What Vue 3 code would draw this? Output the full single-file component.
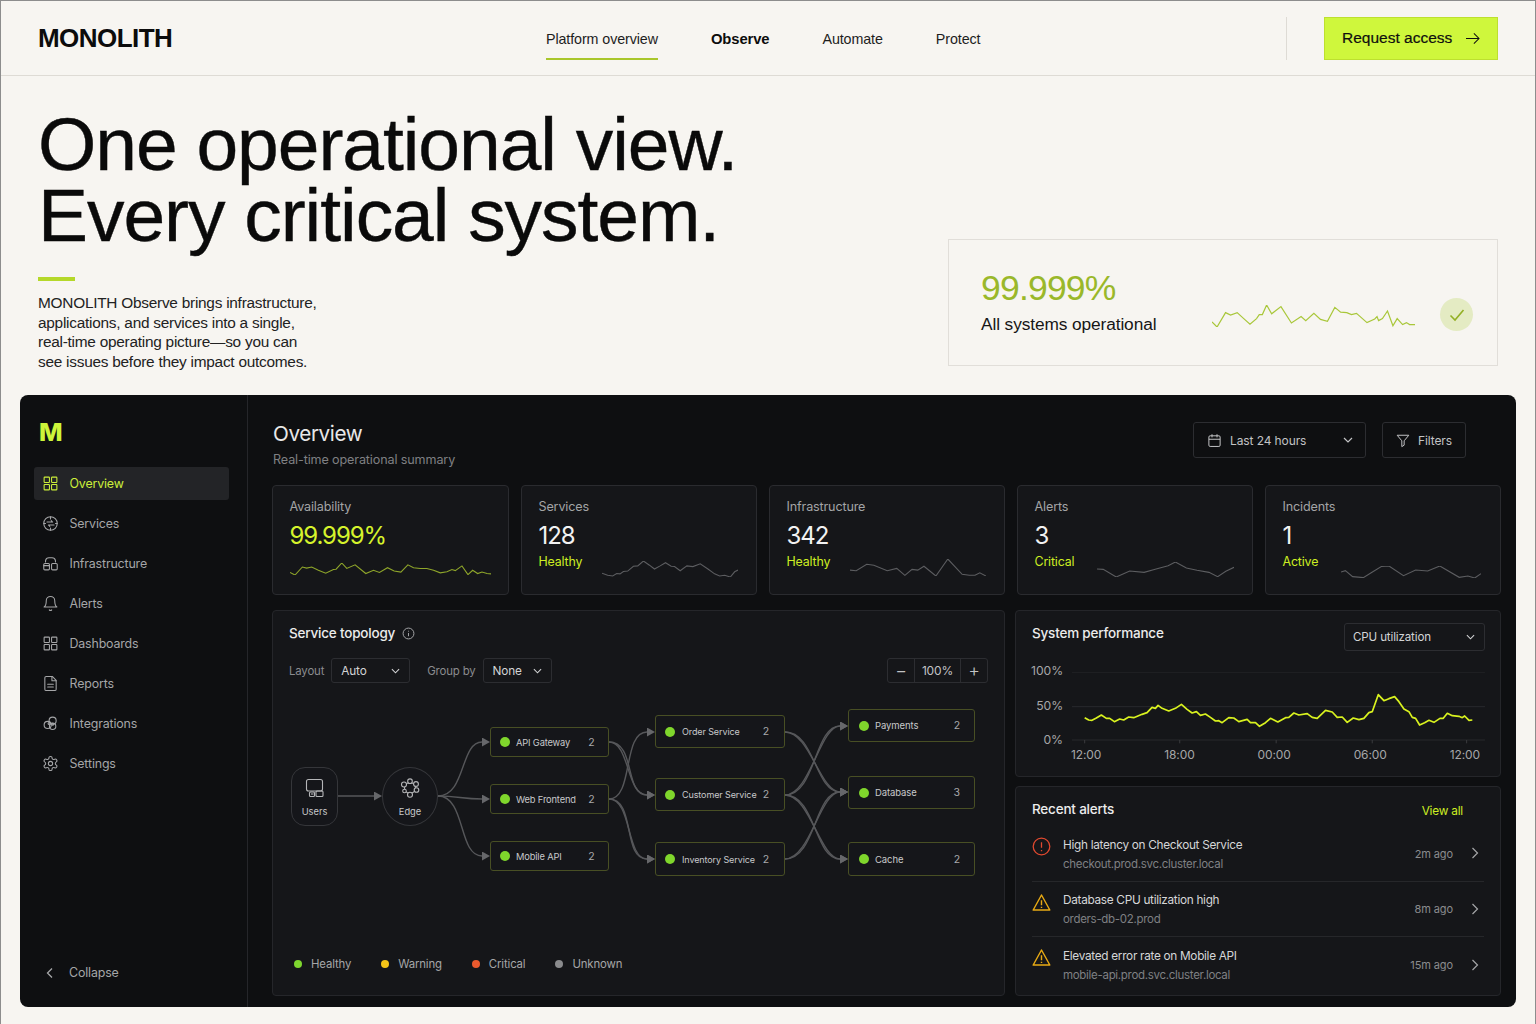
<script setup>
const navLinks = [
  { label: 'Platform overview', active: true },
  { label: 'Observe', bold: true },
  { label: 'Automate' },
  { label: 'Protect' }
]

const icons = {
  grid: '<rect x="3" y="3" width="7.5" height="7.5" rx="1"/><rect x="13.5" y="3" width="7.5" height="7.5" rx="1"/><rect x="3" y="13.5" width="7.5" height="7.5" rx="1"/><rect x="13.5" y="13.5" width="7.5" height="7.5" rx="1"/>',
  services: '<circle cx="12" cy="12" r="9.5"/><path d="M7 10h8l-2-2M17 14H9l2 2M12 2.5v3M12 18.5v3M2.5 12h2.5M19 12h2.5"/>',
  infra: '<path d="M5 10V8a5 5 0 0 1 5-4h4a5 5 0 0 1 5 4v2"/><rect x="2.5" y="12" width="8" height="9" rx="1.5"/><rect x="13.5" y="12" width="8" height="9" rx="1.5"/><path d="M2.5 15h8"/>',
  bell: '<path d="M6 8a6 6 0 0 1 12 0c0 7 3 9 3 9H3s3-2 3-9"/><path d="M10.3 21a2 2 0 0 0 3.4 0"/>',
  file: '<path d="M14.5 2H6a2 2 0 0 0-2 2v16a2 2 0 0 0 2 2h12a2 2 0 0 0 2-2V7.5z"/><path d="M14 2v6h6M8 13h8M8 17h8"/>',
  puzzle: '<circle cx="8" cy="14" r="5"/><circle cx="15" cy="8" r="5"/><circle cx="15" cy="16" r="4.5"/><circle cx="10" cy="12" r="1.4"/><circle cx="15" cy="13" r="1.4"/>',
  gear: '<path d="M12.22 2h-.44a2 2 0 0 0-2 2v.18a2 2 0 0 1-1 1.73l-.43.25a2 2 0 0 1-2 0l-.15-.08a2 2 0 0 0-2.73.73l-.22.38a2 2 0 0 0 .73 2.73l.15.1a2 2 0 0 1 1 1.72v.51a2 2 0 0 1-1 1.74l-.15.09a2 2 0 0 0-.73 2.73l.22.38a2 2 0 0 0 2.73.73l.15-.08a2 2 0 0 1 2 0l.43.25a2 2 0 0 1 1 1.73V20a2 2 0 0 0 2 2h.44a2 2 0 0 0 2-2v-.18a2 2 0 0 1 1-1.73l.43-.25a2 2 0 0 1 2 0l.15.08a2 2 0 0 0 2.73-.73l.22-.39a2 2 0 0 0-.73-2.73l-.15-.08a2 2 0 0 1-1-1.74v-.5a2 2 0 0 1 1-1.74l.15-.09a2 2 0 0 0 .73-2.73l-.22-.38a2 2 0 0 0-2.73-.73l-.15.08a2 2 0 0 1-2 0l-.43-.25a2 2 0 0 1-1-1.73V4a2 2 0 0 0-2-2z"/><circle cx="12" cy="12" r="3"/>'
}

const sideItems = [
  { label: 'Overview', icon: 'grid', active: true },
  { label: 'Services', icon: 'services' },
  { label: 'Infrastructure', icon: 'infra' },
  { label: 'Alerts', icon: 'bell' },
  { label: 'Dashboards', icon: 'grid' },
  { label: 'Reports', icon: 'file' },
  { label: 'Integrations', icon: 'puzzle' },
  { label: 'Settings', icon: 'gear' }
]

// sparkline points were read off the reference, scale comes from min/max
function spark(str) {
  const nums = str.split(/[ ,]+/).map(Number)
  const xs = nums.filter((_, i) => i % 2 === 0)
  const ys = nums.filter((_, i) => i % 2 === 1)
  const minX = Math.min(...xs)
  const minY = Math.min(...ys)
  return {
    points: str,
    viewBox: `${minX} ${minY} ${Math.max(...xs) - minX} ${Math.max(...ys) - minY}`
  }
}

const heroSpark = spark('730,963 743,976 765,940 778,946 795,940 812,955 828,969 845,955 852,945 860,945 871,921 884,943 908,925 935,966 960,950 972,960 993,942 1010,957 1028,962 1047,927 1062,939 1078,940 1090,945 1103,942 1130,965 1150,956 1156,950 1160,960 1170,955 1183,936 1197,973 1208,955 1222,970 1232,965 1240,970 1254,970')

const kpis = [
  {
    label: 'Availability', value: '99.999%', lime: true, w: 201, h: 12,
    line: spark('60,276 75,283 97,261 110,264 125,261 145,270 167,278 190,268 198,267 215,250 230,265 255,255 287,279 310,270 328,276 352,263 372,272 392,275 413,255 430,263 450,265 470,265 490,270 510,277 530,274 545,268 555,271 575,258 593,282 607,270 622,279 635,275 650,279 662,280')
  },
  {
    label: 'Services', value: '128', sub: 'Healthy', w: 136, h: 16, top: 9, right: 18,
    line: spark('998,279 1015,285 1030,287 1042,280 1052,281 1062,274 1075,273 1092,259 1105,258 1122,244 1140,256 1155,267 1172,258 1188,249 1205,259 1215,260 1232,272 1252,258 1270,260 1292,252 1315,267 1335,281 1350,287 1365,285 1382,290 1395,275 1405,270')
  },
  {
    label: 'Infrastructure', value: '342', sub: 'Healthy', w: 136, h: 17, top: 7, right: 18,
    line: spark('190,270 203,272 225,253 240,256 268,272 288,265 305,285 320,268 332,270 345,259 370,287 395,238 425,282 440,285 452,285 462,278 475,287')
  },
  {
    label: 'Alerts', value: '3', sub: 'Critical', w: 137, h: 15, top: 10, right: 18,
    line: spark('707,268 720,269 747,292 775,274 805,278 830,268 855,258 870,247 893,265 915,272 940,278 958,291 975,275 992,263')
  },
  {
    label: 'Incidents', value: '1', sub: 'Active', w: 140, h: 12, top: 14, right: 19,
    line: spark('1216,277 1225,273 1240,291 1262,294 1280,278 1300,260 1315,259 1345,288 1370,271 1395,274 1420,259 1460,293 1478,289 1492,295 1505,282')
  }
]

const cpuLine = '193,323 205,330 215,331 228,324 243,315 258,325 268,325 282,335 298,327 310,330 325,321 340,323 365,313 380,308 395,292 405,295 413,286 425,295 445,303 465,295 483,283 500,298 515,309 528,305 540,316 555,312 570,322 585,333 595,332 605,338 625,323 640,324 655,335 680,328 690,338 705,338 717,349 735,338 750,325 772,336 795,323 805,322 820,309 835,315 860,311 875,322 890,325 915,301 935,306 950,322 965,321 980,337 998,324 1015,329 1030,325 1045,308 1055,305 1073,254 1090,272 1105,266 1122,260 1135,275 1150,297 1165,305 1175,322 1185,325 1197,345 1212,338 1225,331 1240,337 1258,325 1268,325 1280,310 1295,317 1315,319 1325,323 1332,318 1345,331 1355,330'

// canvas sits at 273,695 on the page, node coordinates are page coordinates
const originX = 273
const originY = 695
const services = [
  { name: 'API Gateway', count: 2, x: 490, y: 727, w: 119, h: 30, tier: 'first' },
  { name: 'Web Frontend', count: 2, x: 490, y: 784, w: 119, h: 30, tier: 'first' },
  { name: 'Mobile API', count: 2, x: 490, y: 841, w: 119, h: 30, tier: 'first' },
  { name: 'Order Service', count: 2, x: 655, y: 715, w: 130, h: 33, tier: 'mid' },
  { name: 'Customer Service', count: 2, x: 655, y: 778, w: 130, h: 33, tier: 'mid' },
  { name: 'Inventory Service', count: 2, x: 655, y: 842, w: 130, h: 34, tier: 'mid' },
  { name: 'Payments', count: 2, x: 848, y: 709, w: 127, h: 33, tier: 'big' },
  { name: 'Database', count: 3, x: 848, y: 776, w: 127, h: 33, tier: 'big' },
  { name: 'Cache', count: 2, x: 848, y: 842, w: 127, h: 34, tier: 'big' }
]

const edges = [
  'M338 796 L374 796',
  'M438 796 C466 796 460 742 482 742',
  'M438 796 C458 796 462 799 482 799',
  'M438 796 C466 796 458 856 482 856',
  'M609 799 C634 799 622 732 647 732',
  'M609 742 C630 742 626 795 647 795',
  'M609 742 C636 742 624 795 647 795',
  'M609 799 C632 799 626 859 647 859',
  'M609 799 C636 799 622 859 647 859',
  'M785 732 C815 732 815 792 840 792',
  'M785 732 C810 732 820 792 840 792',
  'M785 795 C816 795 814 726 840 726',
  'M785 795 C810 795 820 726 840 726',
  'M785 795 C816 795 814 859 840 859',
  'M785 795 C810 795 820 859 840 859',
  'M785 859 C816 859 814 792 840 792',
  'M785 859 C810 859 820 792 840 792'
]

const legend = [
  { label: 'Healthy', color: '#7ed62f' },
  { label: 'Warning', color: '#f5c518' },
  { label: 'Critical', color: '#ea5a2e' },
  { label: 'Unknown', color: '#8a8b8d' }
]

const alerts = [
  { title: 'High latency on Checkout Service', host: 'checkout.prod.svc.cluster.local', time: '2m ago', level: 'critical' },
  { title: 'Database CPU utilization high', host: 'orders-db-02.prod', time: '8m ago', level: 'warning' },
  { title: 'Elevated error rate on Mobile API', host: 'mobile-api.prod.svc.cluster.local', time: '15m ago', level: 'warning' }
]
</script>

<template>
  <div class="page">
    <header class="topbar">
      <div class="brand">MONOLITH</div>
      <nav class="nav">
        <a v-for="link in navLinks" :key="link.label" class="nav-link" :class="{ active: link.active, bold: link.bold }">{{ link.label }}</a>
      </nav>
      <div class="topbar-right">
        <span class="divider"></span>
        <button class="cta">
          Request access
          <svg width="15" height="13" viewBox="0 0 16 14" fill="none" stroke="currentColor" stroke-width="1.100"><path d="M1 7h14M9.500 1.500 15 7l-5.500 5.500" /></svg>
        </button>
      </div>
    </header>

    <section class="hero">
      <div class="hero-copy">
        <h1>One operational view.<br />Every critical system.</h1>
        <div class="accent"></div>
        <p>MONOLITH Observe brings infrastructure,<br />applications, and services into a single,<br />real-time operating picture—so you can<br />see issues before they impact outcomes.</p>
      </div>
      <div class="status-card">
        <div class="status-text">
          <div class="status-value">99.999%</div>
          <div class="status-label">All systems operational</div>
        </div>
        <svg class="status-spark" width="203" height="22" :viewBox="heroSpark.viewBox" preserveAspectRatio="none" fill="none">
          <polyline :points="heroSpark.points" stroke="#a9c73a" stroke-width="1.200" vector-effect="non-scaling-stroke" />
        </svg>
        <div class="status-check">
          <svg width="16" height="14" viewBox="0 0 16 14" fill="none" stroke="#93b025" stroke-width="1.600"><path d="M1.500 7.500 6 12 14.500 2" /></svg>
        </div>
      </div>
    </section>

    <section class="panel">
      <aside class="sidebar">
        <div class="side-logo">M</div>
        <div class="side-list">
          <a v-for="item in sideItems" :key="item.label" class="side-item" :class="{ active: item.active }">
            <svg width="17" height="17" viewBox="0 0 24 24" fill="none" stroke="currentColor" stroke-width="1.500" stroke-linecap="round" stroke-linejoin="round" v-html="icons[item.icon]"></svg>
            {{ item.label }}
          </a>
        </div>
        <a class="collapse">
          <svg width="10" height="12" viewBox="0 0 10 12" fill="none" stroke="currentColor" stroke-width="1.300"><path d="M7 1.500 2.500 6 7 10.500" /></svg>
          Collapse
        </a>
      </aside>

      <main class="main">
        <div class="main-head">
          <div class="head-text">
            <h2>Overview</h2>
            <div class="subtitle">Real-time operational summary</div>
          </div>
          <div class="head-actions">
            <button class="ghost range">
              <svg width="15" height="15" viewBox="0 0 24 24" fill="none" stroke="currentColor" stroke-width="1.600"><rect x="3" y="4.500" width="18" height="17" rx="2" /><path d="M3 10h18M8 2v5M16 2v5" /></svg>
              <span>Last 24 hours</span>
              <svg class="push" width="10" height="6" viewBox="0 0 10 6" fill="none" stroke="currentColor" stroke-width="1.200"><path d="M1 1l4 4 4-4" /></svg>
            </button>
            <button class="ghost filters">
              <svg width="15" height="15" viewBox="0 0 24 24" fill="none" stroke="currentColor" stroke-width="1.700" stroke-linejoin="round"><path d="M2 3h20l-8 9.500V20l-4 2.500V12.500z" /></svg>
              <span>Filters</span>
            </button>
          </div>
        </div>

        <div class="kpis">
          <div v-for="kpi in kpis" :key="kpi.label" class="kpi">
            <div class="kpi-label">{{ kpi.label }}</div>
            <div class="kpi-value" :class="{ lime: kpi.lime }">{{ kpi.value }}</div>
            <div class="kpi-foot" :class="{ wide: !kpi.sub }">
              <span v-if="kpi.sub" class="kpi-sub">{{ kpi.sub }}</span>
              <svg :width="kpi.w" :height="kpi.h" :viewBox="kpi.line.viewBox" preserveAspectRatio="none" fill="none" :style="{ marginTop: (kpi.top || 0) + 'px', marginRight: (kpi.right ? kpi.right - 16 : 0) + 'px' }">
                <polyline :points="kpi.line.points" :stroke="kpi.lime ? '#8fa62a' : '#5c5d60'" stroke-width="1.100" vector-effect="non-scaling-stroke" />
              </svg>
            </div>
          </div>
        </div>

        <div class="lower">
          <div class="card topology">
            <div class="topo-title">
              Service topology
              <svg width="13" height="13" viewBox="0 0 24 24" fill="none" stroke="#a5a6a8" stroke-width="1.800"><circle cx="12" cy="12" r="10" /><path d="M12 11v6M12 7v1.500" /></svg>
            </div>
            <div class="topo-tools">
              <span class="tool-label">Layout</span>
              <div class="select auto-sel">Auto
                <svg width="9" height="6" viewBox="0 0 10 6" fill="none" stroke="currentColor" stroke-width="1.200"><path d="M1 1l4 4 4-4" /></svg>
              </div>
              <span class="tool-label group-label">Group by</span>
              <div class="select none-sel">None
                <svg width="9" height="6" viewBox="0 0 10 6" fill="none" stroke="currentColor" stroke-width="1.200"><path d="M1 1l4 4 4-4" /></svg>
              </div>
              <div class="zoomer">
                <span class="z-btn">−</span>
                <span class="z-val">100%</span>
                <span class="z-btn">+</span>
              </div>
            </div>

            <div class="canvas">
              <svg class="edges" :viewBox="`${originX} ${originY} 731 245`" fill="none">
                <defs>
                  <marker id="tip" markerWidth="8" markerHeight="9" refX="0" refY="4.500" orient="auto" markerUnits="userSpaceOnUse">
                    <path d="M0 0 8 4.500 0 9z" fill="#66676a" />
                  </marker>
                </defs>
                <path v-for="d in edges" :key="d" :d="d" stroke="#56575a" stroke-width="1.400" marker-end="url(#tip)" />
              </svg>

              <div class="hub users" :style="{ left: 291 - originX + 'px', top: 767 - originY + 'px' }">
                <svg width="20" height="20" viewBox="0 0 20 20" fill="none" stroke="#b5b6b8" stroke-width="1.100" stroke-linejoin="round"><rect x="1.500" y="1.500" width="16" height="11.500" rx="2" /><path d="M6 16h2.500" /><rect x="4.500" y="14" width="5" height="4.500" rx="1" /><rect x="11" y="13" width="7" height="5.500" rx="1" /></svg>
                <span>Users</span>
              </div>
              <div class="hub edge" :style="{ left: 382 - originX + 'px', top: 767 - originY + 'px' }">
                <svg width="20" height="20" viewBox="0 0 20 20" fill="none" stroke="#b5b6b8" stroke-width="1.100"><circle cx="10" cy="10" r="5.500" /><circle cx="10" cy="3.200" r="2.300" fill="#15161a" /><circle cx="4" cy="6.500" r="2.500" fill="#15161a" /><circle cx="16" cy="6" r="2.400" fill="#15161a" /><circle cx="16.500" cy="12" r="2.300" fill="#15161a" /><circle cx="10" cy="16.800" r="2.500" fill="#15161a" /><circle cx="4.500" cy="13" r="1.800" fill="#15161a" /></svg>
                <span>Edge</span>
              </div>

              <div
                v-for="s in services"
                :key="s.name"
                class="node"
                :class="s.tier"
                :style="{ left: s.x - originX + 'px', top: s.y - originY + 'px', width: s.w + 'px', height: s.h + 'px' }"
              >
                <i class="node-dot"></i>
                <span class="node-name">{{ s.name }}</span>
                <span class="node-count">{{ s.count }}</span>
              </div>
            </div>

            <div class="legend">
              <span v-for="l in legend" :key="l.label" class="legend-item">
                <i :style="{ background: l.color }"></i>{{ l.label }}
              </span>
            </div>
          </div>

          <div class="side-cards">
            <div class="card perf">
              <div class="perf-head">
                <div class="card-title">System performance</div>
                <div class="select cpu-sel">CPU utilization
                  <svg width="9" height="6" viewBox="0 0 10 6" fill="none" stroke="currentColor" stroke-width="1.200"><path d="M1 1l4 4 4-4" /></svg>
                </div>
              </div>
              <div class="chart">
                <div class="y-axis"><span>100%</span><span>50%</span><span>0%</span></div>
                <svg class="plot" width="413" height="79" viewBox="155 186 1238 237" preserveAspectRatio="none" fill="none">
                  <path d="M155 186H1393M155 290H1393M155 390H1393" stroke="#28292c" stroke-width="1" vector-effect="non-scaling-stroke" />
                  <path d="M193 390v10M478 390v10M767 390v10M1055 390v10M1338 390v10" stroke="#3a3b3e" stroke-width="1" vector-effect="non-scaling-stroke" />
                  <polyline :points="cpuLine" stroke="#d9f21f" stroke-width="1.700" stroke-linejoin="round" vector-effect="non-scaling-stroke" />
                </svg>
              </div>
              <div class="x-axis"><span>12:00</span><span>18:00</span><span>00:00</span><span>06:00</span><span>12:00</span></div>
            </div>

            <div class="card recent">
              <div class="recent-head">
                <div class="card-title">Recent alerts</div>
                <a class="view-all">View all</a>
              </div>
              <div v-for="a in alerts" :key="a.title" class="alert">
                <svg v-if="a.level === 'critical'" class="alert-icon" width="19" height="19" viewBox="0 0 24 24" fill="none" stroke="#e0492f" stroke-width="1.600"><circle cx="12" cy="12" r="10.500" /><path d="M12 6.500v7M12 16.500v1.500" /></svg>
                <svg v-else class="alert-icon" width="19" height="19" viewBox="0 0 24 24" fill="none" stroke="#e8aa14" stroke-width="1.800" stroke-linejoin="round"><path d="M12 2.500 1.500 21.500h21z" /><path d="M12 9v6.500M12 17.500v1.500" /></svg>
                <div class="alert-text">
                  <div class="alert-title">{{ a.title }}</div>
                  <div class="alert-host">{{ a.host }}</div>
                </div>
                <span class="alert-time">{{ a.time }}</span>
                <svg class="alert-chev" width="8" height="12" viewBox="0 0 8 12" fill="none" stroke="#a5a6a8" stroke-width="1.200"><path d="M1.500 1 6.500 6l-5 5" /></svg>
              </div>
            </div>
          </div>
        </div>
      </main>
    </section>
  </div>
</template>

<style>
html,
body {
  margin: 0;
  background: #f7f5f1;
}
</style>

<style scoped>
.page {
  box-sizing: border-box;
  width: 1536px;
  height: 1024px;
  overflow: hidden;
  background: #f7f5f1;
  border: 1px solid #8d8d8d;
  border-bottom: 0;
  font-family: "Liberation Sans", Arial, sans-serif;
  color: #111;
}

.topbar {
  display: flex;
  align-items: center;
  height: 75px;
  box-sizing: border-box;
  padding: 0 37px;
  border-bottom: 1px solid #dedbd5;
}

.brand {
  width: 508px;
  margin-top: 1px;
  font-size: 26px;
  font-weight: 700;
  letter-spacing: -0.55px;
  color: #0c0c0c;
}

.nav {
  display: flex;
  gap: 53px;
  align-self: stretch;
}

.nav-link {
  display: flex;
  align-items: center;
  height: 39px;
  margin-top: 17px;
  padding-top: 1px;
  font-size: 14.300px;
  letter-spacing: -0.100px;
  color: #1d1d1d;
  border-bottom: 2px solid transparent;
}

.nav-link.active {
  border-bottom-color: #a9c62b;
}

.nav-link.bold {
  font-size: 14.800px;
  font-weight: 700;
  color: #0c0c0c;
}

.topbar-right {
  display: flex;
  align-items: center;
  gap: 37px;
  margin-left: auto;
}

.divider {
  width: 1px;
  height: 43px;
  background: #dedbd5;
}

.cta {
  display: flex;
  align-items: center;
  justify-content: space-between;
  box-sizing: border-box;
  width: 174px;
  height: 43px;
  padding: 0 17px 0 17px;
  background: #cff73c;
  border: 1px solid #bde02f;
  font-family: "Liberation Sans", Arial, sans-serif;
  font-size: 15.500px;
  color: #0f0f0f;
  -webkit-text-stroke: 0.2px #0f0f0f;
}

.hero {
  display: flex;
  justify-content: space-between;
  height: 319px;
  box-sizing: border-box;
  padding: 0 37px 0 37px;
}

.hero h1 {
  margin: 33px 0 0;
  font-size: 75px;
  font-weight: 400;
  line-height: 70.500px;
  letter-spacing: -1.050px;
  color: #0a0a0a;
  -webkit-text-stroke: 0.4px #0a0a0a;
}

.accent {
  width: 37px;
  height: 4px;
  margin-top: 27px;
  background: #b5d82a;
}

.hero p {
  margin: 12px 0 0;
  font-size: 15.400px;
  line-height: 19.500px;
  letter-spacing: -0.250px;
  color: #222;
}

.status-card {
  display: flex;
  align-items: center;
  align-self: flex-end;
  box-sizing: border-box;
  width: 550px;
  height: 127px;
  margin-bottom: 29px;
  padding: 0 24px 0 32px;
  border: 1.500px solid #e1ded9;
}

.status-value {
  font-size: 35.500px;
  line-height: 40px;
  letter-spacing: -0.800px;
  color: #9ab82a;
}

.status-label {
  margin-top: 5px;
  font-size: 17.300px;
  line-height: 22px;
  letter-spacing: -0.100px;
  color: #161616;
}

.status-text {
  width: 231px;
  margin-top: -2px;
}

.status-spark {
  margin-top: 27px;
}

.status-check {
  display: flex;
  align-items: center;
  justify-content: center;
  width: 33px;
  height: 33px;
  margin-top: 24px;
  margin-left: auto;
  border-radius: 50%;
  background: #e4ebc3;
}

.panel {
  display: flex;
  width: 1496px;
  height: 612px;
  margin-left: 19px;
  background: #0e0f11;
  border-radius: 8px;
  overflow: hidden;
  font-family: Inter, "Liberation Sans", sans-serif;
  color: #a5a6a8;
}

.sidebar {
  display: flex;
  flex-direction: column;
  box-sizing: border-box;
  width: 228px;
  flex: none;
  padding: 21px 18px 27px 14px;
  border-right: 1px solid #25262a;
}

.side-logo {
  height: 30px;
  margin-left: 5px;
  font-size: 25px;
  font-weight: 800;
  line-height: 32px;
  color: #cdf53a;
}

.side-list {
  display: flex;
  flex-direction: column;
  gap: 7px;
  margin-top: 21px;
}

.side-item {
  display: flex;
  align-items: center;
  gap: 10.500px;
  height: 33px;
  padding-left: 8px;
  padding-bottom: 1px;
  box-sizing: border-box;
  border-radius: 3px;
  font-size: 12.400px;
  letter-spacing: -0.150px;
}

.side-item.active {
  background: #232427;
  color: #cdf03a;
}

.collapse {
  display: flex;
  align-items: center;
  gap: 14px;
  margin-top: auto;
  padding-left: 11px;
  font-size: 12.400px;
  letter-spacing: -0.150px;
}

.main {
  flex: 1;
  min-width: 0;
  padding: 25px 15px 11px 24px;
}

.main-head {
  display: flex;
  justify-content: space-between;
  height: 65px;
  padding: 0 35px 0 1px;
}

.head-text {
  padding-top: 1px;
}

.main-head h2 {
  margin: 0;
  font-size: 20.700px;
  font-weight: 400;
  line-height: 26px;
  letter-spacing: -0.400px;
  color: #e8e8e8;
}

.subtitle {
  margin-top: 5px;
  font-size: 12.600px;
  letter-spacing: -0.130px;
  color: #7f8083;
}

.head-actions {
  display: flex;
  gap: 16px;
  margin-top: 2px;
}

.ghost {
  display: flex;
  align-items: center;
  gap: 8px;
  box-sizing: border-box;
  height: 36px;
  padding: 0 13px;
  background: transparent;
  border: 1px solid #2c2d31;
  border-radius: 3px;
  font-family: Inter, "Liberation Sans", sans-serif;
  font-size: 12px;
  letter-spacing: -0.100px;
  color: #c2c3c5;
}

.range {
  width: 173px;
  padding-right: 12px;
}

.filters {
  width: 84px;
}

.push {
  margin-left: auto;
}

.kpis {
  display: grid;
  grid-template-columns: 237px repeat(4, 1fr);
  gap: 12px;
}

.kpi {
  box-sizing: border-box;
  height: 110px;
  padding: 13px 0 0 16.500px;
  background: #151619;
  border: 1px solid #2a2b2f;
  border-radius: 4px;
}

.kpi-label {
  font-size: 12.600px;
  line-height: 16px;
  letter-spacing: -0.150px;
  color: #a3a4a6;
}

.kpi-value {
  margin-top: 6px;
  font-size: 24px;
  line-height: 30px;
  letter-spacing: -1.100px;
  color: #f2f2f2;
}

.kpi-value.lime {
  color: #d6f32c;
}

.kpi-foot {
  display: flex;
  justify-content: space-between;
  align-items: flex-start;
  margin-top: 1px;
  padding-right: 16px;
}

.kpi-foot.wide {
  margin-top: 12px;
}

.kpi-sub {
  padding-top: 1px;
  font-size: 12.400px;
  line-height: 18px;
  letter-spacing: -0.150px;
  color: #cdee22;
}

.lower {
  display: flex;
  gap: 10px;
  margin-top: 15px;
}

.card {
  box-sizing: border-box;
  background: #151619;
  border: 1px solid #25262a;
  border-radius: 4px;
}

.topology {
  width: 733px;
  height: 386px;
  flex: none;
  padding: 13px 16px 0;
}

.topo-title,
.card-title {
  font-size: 13.500px;
  font-weight: 500;
  line-height: 18px;
  letter-spacing: -0.200px;
  color: #ececec;
}

.topo-title {
  display: flex;
  align-items: center;
  gap: 7px;
}

.topo-tools {
  display: flex;
  align-items: center;
  margin-top: 16px;
  height: 25px;
}

.tool-label {
  margin-right: 7px;
  font-size: 11.400px;
  letter-spacing: -0.150px;
  color: #8b8c8f;
}

.group-label {
  margin-left: 17px;
}

.select {
  display: flex;
  align-items: center;
  justify-content: space-between;
  box-sizing: border-box;
  height: 25px;
  padding: 0 9px;
  border: 1px solid #2c2d31;
  border-radius: 3px;
  font-size: 11.800px;
  letter-spacing: -0.150px;
  color: #d3d4d6;
}

.auto-sel {
  width: 79px;
}

.none-sel {
  width: 69px;
}

.cpu-sel {
  width: 141px;
  height: 28px;
  padding-left: 8px;
  font-size: 11.600px;
}

.zoomer {
  display: flex;
  margin-left: auto;
  height: 25px;
  box-sizing: border-box;
  border: 1px solid #2c2d31;
  border-radius: 3px;
  font-size: 12px;
  letter-spacing: -0.150px;
  color: #c2c3c5;
}

.z-btn {
  display: flex;
  align-items: center;
  justify-content: center;
  width: 26px;
  font-size: 18px;
  font-weight: 300;
}

.z-val {
  display: flex;
  align-items: center;
  justify-content: center;
  box-sizing: border-box;
  width: 47px;
  border-left: 1px solid #2c2d31;
  border-right: 1px solid #2c2d31;
}

.canvas {
  position: relative;
  width: 731px;
  height: 245px;
  margin: 12px 0 0 -16px;
}

.edges {
  position: absolute;
  inset: 0;
  width: 100%;
  height: 100%;
}

.hub {
  position: absolute;
  display: flex;
  flex-direction: column;
  align-items: center;
  justify-content: center;
  gap: 8px;
  box-sizing: border-box;
  height: 59px;
  padding-top: 2px;
  background: #15161a;
  border: 1px solid #35363a;
  font-size: 9.300px;
  color: #c8c9cb;
}

.hub.users {
  width: 47px;
  border-radius: 14px;
}

.hub.edge {
  width: 56px;
  border-radius: 50%;
}

.node {
  position: absolute;
  display: flex;
  align-items: center;
  box-sizing: border-box;
  padding: 0 15px 0 9px;
  background: #15161a;
  border: 1px solid #484f24;
  border-radius: 3px;
  font-size: 9.300px;
  letter-spacing: -0.150px;
  color: #c8c9cb;
}

.node.first {
  padding-right: 13.500px;
}

.node.mid {
  font-size: 9px;
  letter-spacing: -0.100px;
}

.node.mid .node-dot {
  margin-right: 7px;
}

.node.big {
  padding: 0 14px 0 10px;
  font-size: 9.500px;
  letter-spacing: -0.100px;
}

.node-dot {
  flex: none;
  width: 10px;
  height: 10px;
  margin-right: 6px;
  border-radius: 50%;
  background: #7fd62c;
}

.node-count {
  margin-left: auto;
  font-size: 10.500px;
  color: #a9aaac;
}

.legend {
  display: flex;
  align-items: center;
  margin-top: 17px;
  padding-left: 5px;
  font-size: 11.400px;
  letter-spacing: -0.150px;
  color: #a5a6a8;
}

.legend-item {
  display: flex;
  align-items: center;
  gap: 9px;
  margin-right: 30px;
}

.legend-item i {
  width: 8px;
  height: 8px;
  border-radius: 50%;
}

.side-cards {
  display: flex;
  flex: 1;
  flex-direction: column;
  gap: 9px;
}

.perf {
  height: 167px;
  padding: 12px 15px 0 16px;
}

.perf-head {
  display: flex;
  justify-content: space-between;
  align-items: flex-start;
}

.perf-head .card-title {
  margin-top: 1px;
}

.chart {
  display: flex;
  justify-content: space-between;
  margin-top: 21px;
}

.y-axis {
  display: flex;
  flex-direction: column;
  align-items: flex-end;
  width: 31px;
  height: 85px;
  justify-content: space-between;
  margin-top: -9px;
  font-size: 12.200px;
  line-height: 16px;
  letter-spacing: -0.100px;
  color: #a5a6a8;
}

.x-axis {
  display: flex;
  justify-content: space-between;
  margin: -4px 5px 0 39px;
  font-size: 12px;
  letter-spacing: -0.100px;
  color: #a5a6a8;
}

.recent {
  height: 210px;
  padding: 13px 16px 0;
}

.recent-head {
  display: flex;
  justify-content: space-between;
  align-items: flex-start;
  padding-right: 21px;
  margin-bottom: 8px;
}

.view-all {
  margin-top: 4px;
  font-size: 11.800px;
  letter-spacing: -0.200px;
  color: #cdee22;
}

.alert {
  display: flex;
  align-items: center;
  height: 55.500px;
  box-sizing: border-box;
  border-bottom: 1px solid #26272a;
}

.alert:last-child {
  border-bottom: 0;
}

.alert-icon {
  flex: none;
  align-self: flex-start;
  margin-top: 11px;
  margin-right: 12px;
}

.alert-text {
  padding-top: 2px;
}

.alert-title {
  font-size: 11.800px;
  line-height: 18px;
  letter-spacing: -0.300px;
  color: #d5d6d8;
}

.alert-host {
  margin-top: 1px;
  font-size: 11.500px;
  line-height: 18px;
  letter-spacing: -0.300px;
  color: #7f8083;
}

.alert-time {
  margin-left: auto;
  padding-top: 1px;
  font-size: 11px;
  letter-spacing: -0.100px;
  color: #8b8c8f;
}

.alert-chev {
  margin-left: 18px;
  margin-right: 5px;
}
</style>
